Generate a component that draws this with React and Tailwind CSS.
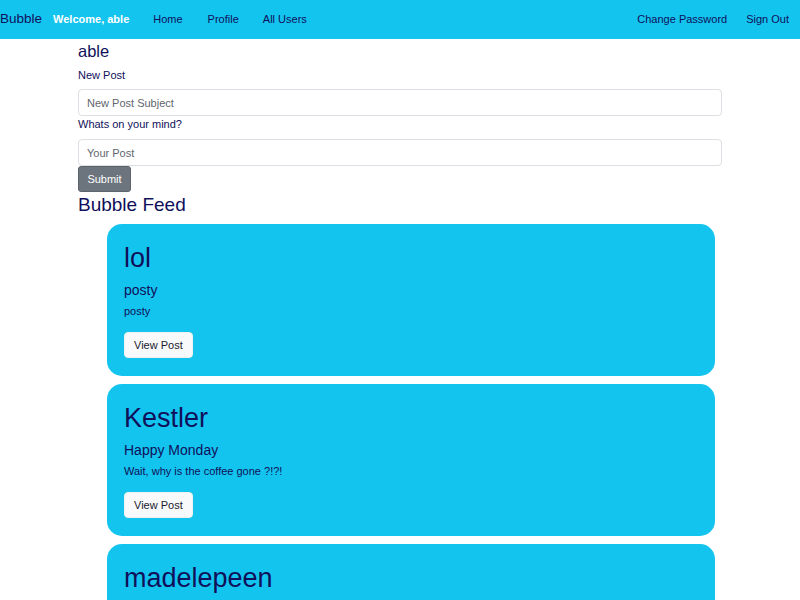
const posts = [
  { user: "lol", subject: "posty", body: "posty" },
  { user: "Kestler", subject: "Happy Monday", body: "Wait, why is the coffee gone ?!?!" },
  { user: "madelepeen" },
];

const Nav = () => (
  <nav className="h-[39px] bg-[#13c4ef] flex items-center text-[11px] text-[#10105a]">
    <span className="text-[13.5px] mr-[11px]">Bubble</span>
    <span className="text-white font-bold mr-[24px]">Welcome, able</span>
    <a className="mr-[25px]">Home</a>
    <a className="mr-[24px]">Profile</a>
    <a>All Users</a>
    <div className="ml-auto flex items-center gap-[19px] pr-[11px]">
      <a>Change Password</a>
      <a>Sign Out</a>
    </div>
  </nav>
);

const PostCard = ({ post }) => (
  <div className="bg-[#13c4ef] rounded-[15px] px-[17px] pt-[17px] h-[152px] text-[#10105a] shrink-0">
    <h2 className="text-[27px] leading-[34px] mb-[6px]">{post.user}</h2>
    {post.subject && (
      <>
        <h5 className="text-[14px] leading-[18px] mb-[4px]">{post.subject}</h5>
        <p className="text-[11px] leading-[16px] mb-[13px]">{post.body}</p>
        <button className="bg-[#f8f9fa] rounded-[4px] px-[9px] h-[26px] text-[11px] text-[#1a1a2e] border border-[#f0f0f0]">
          View Post
        </button>
      </>
    )}
  </div>
);

export default function App() {
  return (
    <div className="h-[600px] overflow-hidden bg-white" style={{ fontFamily: '"Liberation Sans", Arial, sans-serif' }}>
      <Nav />
      <div className="w-[644px] text-[#10105a] ml-[78px]">
        <h4 className="text-[16.5px] leading-[22px] mt-[1px] mb-[5px]">able</h4>
        <label className="block text-[11px] leading-[16px] mb-[6px]">New Post</label>
        <input
          className="w-full h-[27px] border border-[#dcdfe3] rounded-[4px] px-[8px] text-[11px] placeholder:text-[#5f666d] outline-none"
          placeholder="New Post Subject"
        />
        <label className="block text-[11px] leading-[16px] mb-[7px]">Whats on your mind?</label>
        <input
          className="w-full h-[27px] border border-[#dcdfe3] rounded-[4px] px-[8px] text-[11px] placeholder:text-[#5f666d] outline-none"
          placeholder="Your Post"
        />
        <button className="block bg-[#6c757d] text-white text-[11px] h-[26px] w-[53px] rounded-[3px] border border-[#5c636a]">
          Submit
        </button>
        <h3 className="text-[19px] leading-[26px] mb-[6px]">Bubble Feed</h3>
        <div className="flex flex-col gap-[8px] ml-[29px] w-[608px]">
          {posts.map((p) => (
            <PostCard key={p.user} post={p} />
          ))}
        </div>
      </div>
    </div>
  );
}
